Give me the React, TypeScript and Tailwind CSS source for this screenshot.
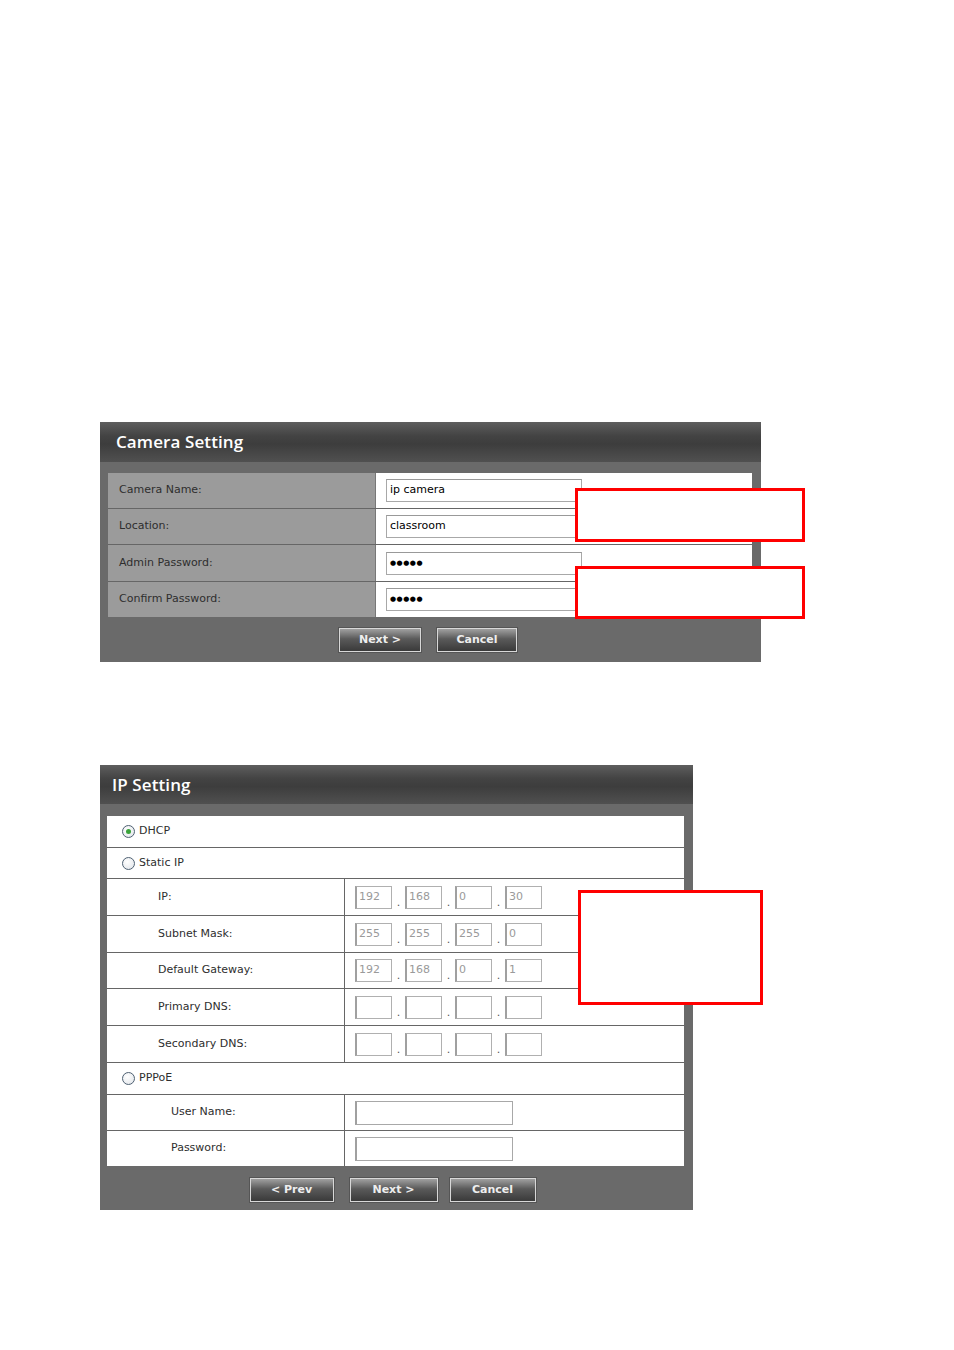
import React from "react";

const FONT = { fontFamily: '"DejaVu Sans", Verdana, sans-serif' };

function Header({ title, pad, h }: { title: string; pad: string; h: string }) {
  return (
    <div
      className={`flex ${h} items-center bg-[linear-gradient(#5e5e5e,#434343_35%,#3d3d3d_55%,#505050)] ${pad}`}
    >
      <span className="text-[17px] font-semibold tracking-[0.1px] text-white [font-family:'Open_Sans',sans-serif]">
        {title}
      </span>
    </div>
  );
}

function Btn({ label, w }: { label: string; w: string }) {
  return (
    <button
      type="button"
      className={`h-[24px] ${w} border border-[#d8d8d8] bg-[linear-gradient(#a0a0a0,#5a5a5a_45%,#3a3a3a)] text-[11px] font-bold text-[#eeeeee] shadow-[0_0_0_1px_#555]`}
    >
      {label}
    </button>
  );
}

function RedBox({ cls }: { cls: string }) {
  return <div className={`absolute border-[3px] border-[#ff0000] bg-white ${cls}`} />;
}

const camRows = [
  { label: "Camera Name:", value: "ip camera", h: "h-[36px]" },
  { label: "Location:", value: "classroom", h: "h-[36px]" },
  { label: "Admin Password:", value: "●●●●●", h: "h-[37px]", pw: true },
  { label: "Confirm Password:", value: "●●●●●", h: "h-[35px]", pw: true, last: true },
];

function CameraSetting() {
  return (
    <div className="relative ml-[100px] w-[661px] bg-[#6a6a6a]" style={FONT}>
      <Header title="Camera Setting" pad="pl-[16px]" h="h-[40px]" />
      <div className="pt-[11px] pl-[8px] pr-[9px]">
        <div className="flex flex-col">
          {camRows.map((r) => (
            <div
              key={r.label}
              className={`flex ${r.h} ${r.last ? "" : "border-b border-[#666]"}`}
            >
              <div className="flex w-[267px] items-center bg-[#9b9b9b] pl-[11px] text-[11px] text-[#2e2e2e]">
                {r.label}
              </div>
              <div className="w-px bg-[#777]" />
              <div className="flex flex-1 items-center bg-white pl-[10px]">
                <div className="flex h-[23px] w-[196px] items-center border border-[#a8a8a8] border-t-[#999] pl-[3px] text-[11px] text-black">
                  {r.pw ? (
                    <span className="text-[7px] tracking-[0.5px]">{r.value}</span>
                  ) : (
                    r.value
                  )}
                </div>
              </div>
            </div>
          ))}
        </div>
      </div>
      <div className="flex justify-center gap-[16px] pt-[11px] pb-[10px] pr-[5px]">
        <Btn label="Next >" w="w-[82px]" />
        <Btn label="Cancel" w="w-[80px]" />
      </div>
      <RedBox cls="left-[475px] top-[66px] h-[54px] w-[230px]" />
      <RedBox cls="left-[475px] top-[144px] h-[53px] w-[230px]" />
    </div>
  );
}

function Radio({ checked }: { checked?: boolean }) {
  return (
    <span className="flex h-[13px] w-[13px] items-center justify-center rounded-full border border-[#4e6072] bg-[radial-gradient(circle_at_40%_35%,#ffffff,#dfe3e8)]">
      {checked ? <span className="h-[5px] w-[5px] rounded-full bg-[#3aa33a]" /> : null}
    </span>
  );
}

function Octet({ v }: { v?: string }) {
  return (
    <div className="flex h-[23px] w-[37px] items-center border border-[#b0b0b0] border-l-2 border-l-[#a0a0a0] pl-[2px] text-[11px] text-[#9a9a9a]">
      {v}
    </div>
  );
}

function IpField({ vals }: { vals: string[] }) {
  return (
    <div className="flex items-end pl-[10px]">
      {vals.map((v, i) => (
        <React.Fragment key={i}>
          {i > 0 ? (
            <span className="w-[13px] pb-[1px] text-center text-[11px] leading-none text-[#555]">.</span>
          ) : null}
          <Octet v={v} />
        </React.Fragment>
      ))}
    </div>
  );
}

function TextField() {
  return (
    <div className="ml-[10px] h-[24px] w-[158px] border border-[#a8a8a8] border-l-2 border-l-[#a0a0a0]" />
  );
}

function SplitRow({
  label,
  h,
  indent,
  last,
  children,
}: {
  label: string;
  h: string;
  indent: string;
  last?: boolean;
  children: React.ReactNode;
}) {
  return (
    <div className={`flex ${h} ${last ? "" : "border-b border-[#666]"}`}>
      <div className={`flex w-[238px] items-center border-r border-[#666] ${indent} text-[11px] text-[#2e2e2e]`}>
        {label}
      </div>
      <div className="flex flex-1 items-center">{children}</div>
    </div>
  );
}

function RadioRow({ label, h, checked }: { label: string; h: string; checked?: boolean }) {
  return (
    <div className={`flex ${h} items-center gap-[4px] border-b border-[#666] pl-[15px] text-[11px] text-[#2e2e2e]`}>
      <Radio checked={checked} />
      <span>{label}</span>
    </div>
  );
}

function IpSetting() {
  return (
    <div className="relative ml-[100px] w-[593px] bg-[#6a6a6a]" style={FONT}>
      <Header title="IP Setting" pad="pl-[12px]" h="h-[39px]" />
      <div className="pt-[12px] pl-[7px] pr-[9px]">
        <div className="flex flex-col bg-white">
          <RadioRow label="DHCP" h="h-[32px]" checked />
          <RadioRow label="Static IP" h="h-[31px]" />
          <SplitRow label="IP:" h="h-[37px]" indent="pl-[51px]">
            <IpField vals={["192", "168", "0", "30"]} />
          </SplitRow>
          <SplitRow label="Subnet Mask:" h="h-[37px]" indent="pl-[51px]">
            <IpField vals={["255", "255", "255", "0"]} />
          </SplitRow>
          <SplitRow label="Default Gateway:" h="h-[36px]" indent="pl-[51px]">
            <IpField vals={["192", "168", "0", "1"]} />
          </SplitRow>
          <SplitRow label="Primary DNS:" h="h-[37px]" indent="pl-[51px]">
            <IpField vals={["", "", "", ""]} />
          </SplitRow>
          <SplitRow label="Secondary DNS:" h="h-[37px]" indent="pl-[51px]">
            <IpField vals={["", "", "", ""]} />
          </SplitRow>
          <RadioRow label="PPPoE" h="h-[32px]" />
          <SplitRow label="User Name:" h="h-[36px]" indent="pl-[64px]">
            <TextField />
          </SplitRow>
          <SplitRow label="Password:" h="h-[35px]" indent="pl-[64px]" last>
            <TextField />
          </SplitRow>
        </div>
      </div>
      <div className="flex justify-center gap-[16px] pt-[12px] pb-[8px] pr-[8px]">
        <Btn label="< Prev" w="w-[84px]" />
        <div className="flex gap-[12px]">
          <Btn label="Next >" w="w-[88px]" />
          <Btn label="Cancel" w="w-[86px]" />
        </div>
      </div>
      <RedBox cls="left-[478px] top-[125px] h-[115px] w-[185px]" />
    </div>
  );
}

export default function App() {
  return (
    <div className="min-h-[1350px] w-[954px] bg-white">
      <div className="h-[422px]" />
      <CameraSetting />
      <div className="h-[103px]" />
      <IpSetting />
    </div>
  );
}
